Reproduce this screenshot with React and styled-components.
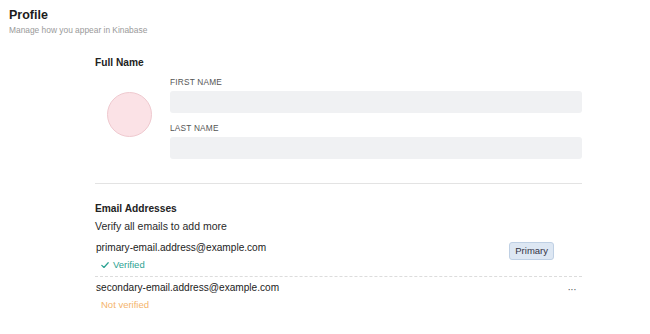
import React from "react";
import styled, { createGlobalStyle } from "styled-components";

const GlobalStyle = createGlobalStyle`
  body {
    margin: 0;
    background: #fff;
    font-family: "Liberation Sans", Arial, sans-serif;
    color: #1f1f1f;
  }
`;

const Page = styled.div`
  padding: 7px 9px 0;
`;

const Title = styled.h1`
  margin: 0;
  font-size: 12.5px;
  line-height: 16px;
  font-weight: 700;
  color: #1c1c1c;
`;

const Subtitle = styled.p`
  margin: 1px 0 0;
  font-size: 8.4px;
  line-height: 12px;
  color: #9a9a9a;
`;

const Content = styled.div`
  margin: 20px 0 0 86px;
  width: 487px;
`;

const SectionTitle = styled.h2`
  margin: 0;
  font-size: 10.2px;
  line-height: 14px;
  font-weight: 700;
  color: #222;
`;

const NameRow = styled.div`
  display: flex;
  align-items: center;
  gap: 18px;
  padding: 0 0 24px;
  border-bottom: 1px solid #e3e3e3;
`;

const Avatar = styled.div`
  flex: none;
  width: 43px;
  height: 43px;
  margin-left: 12px;
  border-radius: 50%;
  background: #fbe2e6;
  border: 1px solid #efc9cf;
`;

const Fields = styled.div`
  flex: 1;
  display: flex;
  flex-direction: column;
  margin-top: 7px;
`;

const Label = styled.label`
  display: block;
  font-size: 8.3px;
  line-height: 10px;
  letter-spacing: 0.2px;
  color: #555;
  margin: ${(p) => (p.$first ? "0" : "10px")} 0 4px;
`;

const Input = styled.div`
  height: 22px;
  border-radius: 3px;
  background: #f0f1f3;
`;

const EmailSection = styled.div`
  padding-top: 18px;
  border-bottom: 1px solid #e8e8e8;
  padding-bottom: 18px;
`;

const Hint = styled.p`
  margin: 3px 0 4px;
  font-size: 10.5px;
  line-height: 14px;
  color: #2a2a2a;
`;

const EmailRow = styled.div`
  display: flex;
  justify-content: space-between;
  align-items: flex-start;
  padding: 4px 0 5px 1px;
  border-bottom: ${(p) => (p.$dashed ? "1px dashed #dcdcdc" : "none")};
`;

const EmailInfo = styled.div`
  display: flex;
  flex-direction: column;
  gap: 4px;
`;

const Address = styled.span`
  font-size: 10.1px;
  line-height: 14px;
  color: #1c1c1c;
`;

const Status = styled.span`
  display: flex;
  align-items: center;
  gap: 4px;
  font-size: 9.5px;
  line-height: 12px;
  margin-left: 5px;
  color: ${(p) => (p.$ok ? "#2aa292" : "#f4b46c")};
`;

const Badge = styled.span`
  font-size: 9.5px;
  line-height: 12px;
  padding: 2px 5px;
  margin: 1px 28px 0 0;
  border-radius: 3px;
  background: #dde7f3;
  border: 1px solid #bfd0e4;
  color: #334;
`;

const More = styled.span`
  font-size: 10px;
  line-height: 10px;
  color: #555;
  letter-spacing: -0.5px;
  margin: 4px 6px 0 0;
`;

function Check() {
  return (
    <svg width="8" height="8" viewBox="0 0 10 10" fill="none">
      <path d="M1 5.4l2.7 2.7L9 2.2" stroke="#2aa292" strokeWidth="1.5" strokeLinecap="round" strokeLinejoin="round" />
    </svg>
  );
}

export default function App() {
  return (
    <Page>
      <GlobalStyle />
      <Title>Profile</Title>
      <Subtitle>Manage how you appear in Kinabase</Subtitle>
      <Content>
        <SectionTitle>Full Name</SectionTitle>
        <NameRow>
          <Avatar />
          <Fields>
            <Label $first>FIRST NAME</Label>
            <Input />
            <Label>LAST NAME</Label>
            <Input />
          </Fields>
        </NameRow>
        <EmailSection>
          <SectionTitle>Email Addresses</SectionTitle>
          <Hint>Verify all emails to add more</Hint>
          <EmailRow $dashed>
            <EmailInfo>
              <Address>primary-email.address@example.com</Address>
              <Status $ok>
                <Check />
                Verified
              </Status>
            </EmailInfo>
            <Badge>Primary</Badge>
          </EmailRow>
          <EmailRow>
            <EmailInfo>
              <Address>secondary-email.address@example.com</Address>
              <Status>Not verified</Status>
            </EmailInfo>
            <More>···</More>
          </EmailRow>
        </EmailSection>
      </Content>
    </Page>
  );
}
